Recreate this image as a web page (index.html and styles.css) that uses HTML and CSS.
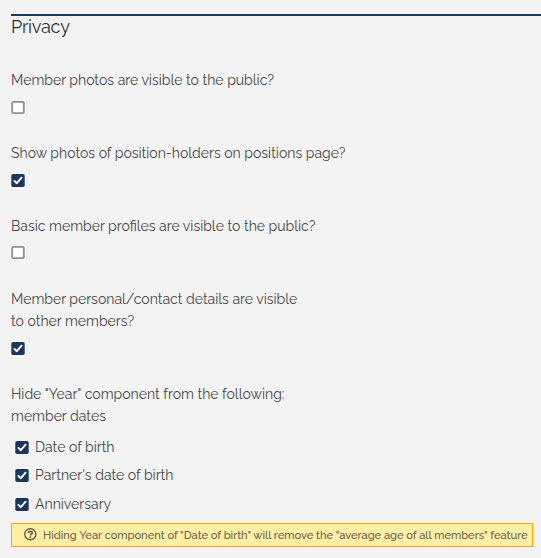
FILE: index.html
```html
<!DOCTYPE html>
<html lang="en">
<head>
  <meta charset="UTF-8" />
  <meta name="viewport" content="width=device-width, initial-scale=1.0"/>
  <title>Privacy</title>
  <link rel="stylesheet" href="styles.css">
</head>
<body>
  <svg class="sprite" aria-hidden="true">
    <symbol id="box-off" viewBox="0 0 14 14">
      <rect x="1.2" y="0.9" width="11.6" height="11.2" rx="1.2" fill="#fff" stroke="#8f8f9d" stroke-width="1.8"/>
    </symbol>
    <symbol id="box-on" viewBox="0 0 14 14">
      <rect x="0.3" y="0" width="13.4" height="13" rx="1.8" fill="#1c375d"/>
      <path d="M3.4 6.9 L5.8 9.2 L10.6 3.7" fill="none" stroke="#fff" stroke-width="1.9" stroke-linecap="round" stroke-linejoin="round"/>
    </symbol>
  </svg>

  <section class="privacy">
    <h2>Privacy</h2>

    <div class="field">
      <p>Member photos are visible to the public?</p>
      <svg class="check"><use href="#box-off"/></svg>
    </div>
    <div class="field">
      <p>Show photos of position-holders on positions page?</p>
      <svg class="check"><use href="#box-on"/></svg>
    </div>
    <div class="field tight">
      <p>Basic member profiles are visible to the public?</p>
      <svg class="check"><use href="#box-off"/></svg>
    </div>
    <div class="field">
      <p>Member personal/contact details are visible<br>to other members?</p>
      <svg class="check"><use href="#box-on"/></svg>
    </div>

    <div class="field dates">
      <p>Hide "Year" component from the following:<br>member dates</p>
      <div class="option"><svg class="check"><use href="#box-on"/></svg>Date of birth</div>
      <div class="option"><svg class="check"><use href="#box-on"/></svg>Partner's date of birth</div>
      <div class="option"><svg class="check"><use href="#box-on"/></svg>Anniversary</div>
    </div>

    <div class="notice">
      <svg class="help" viewBox="0 0 14 14">
        <circle cx="6.8" cy="6.8" r="6" fill="none" stroke="#5a5546" stroke-width="1.4"/>
        <path d="M4.8 5.5 C4.9 3.1 8.9 3.1 8.9 5.5 C8.9 6.9 6.9 6.8 6.9 8.2" fill="none" stroke="#5a5546" stroke-width="1.7"/>
        <circle cx="6.9" cy="10" r="1" fill="#5a5546"/>
      </svg>
      <span>Hiding Year component of "Date of birth" will remove the "average age of all members" feature</span>
    </div>
  </section>
</body>
</html>
```
FILE: styles.css
```css
body {
  margin: 0;
  background-color: #f3f3f3;
  color: #484848;
  font-family: Raleway, Lato, sans-serif;
  font-size: 14.02px;
  line-height: 22px;
}
.sprite {
  display: none;
}
.privacy {
  margin-top: 14px;
  margin-left: 11px;
  border-top: 2px solid #1c375d;
  white-space: nowrap;
}
h2 {
  margin: 0 0 31px;
  color: #2b303b;
  font-size: 18px;
  font-weight: 400;
  letter-spacing: -0.2px;
  line-height: 22px;
}
.field {
  margin-bottom: 28px;
}
.field p {
  margin: 0 0 10px;
}
.check {
  display: block;
  width: 14px;
  height: 14px;
  margin-bottom: -1px;
}
.tight p {
  margin-bottom: 9px;
}
.tight {
  margin-bottom: 29px;
}
.dates {
  margin-bottom: 7px;
}
.option {
  display: flex;
  align-items: flex-start;
  height: 22px;
  padding-left: 4px;
  margin-bottom: 6px;
  line-height: 20px;
}
.option .check {
  margin: 4px 6px 0 0;
}
.option:last-child {
  margin: 7px 0 0;
}
.notice {
  box-sizing: border-box;
  display: flex;
  align-items: center;
  width: 522px;
  height: 24px;
  padding-left: 12px;
  border: 1px solid #ffa500;
  background-color: #ffefa4;
  color: #68624e;
  font-size: 11.08px;
  font-weight: 500;
}
.notice span {
  padding-top: 2px;
}
.help {
  flex: none;
  width: 13px;
  height: 13px;
  margin: 0 6px 1px 0;
}
```
